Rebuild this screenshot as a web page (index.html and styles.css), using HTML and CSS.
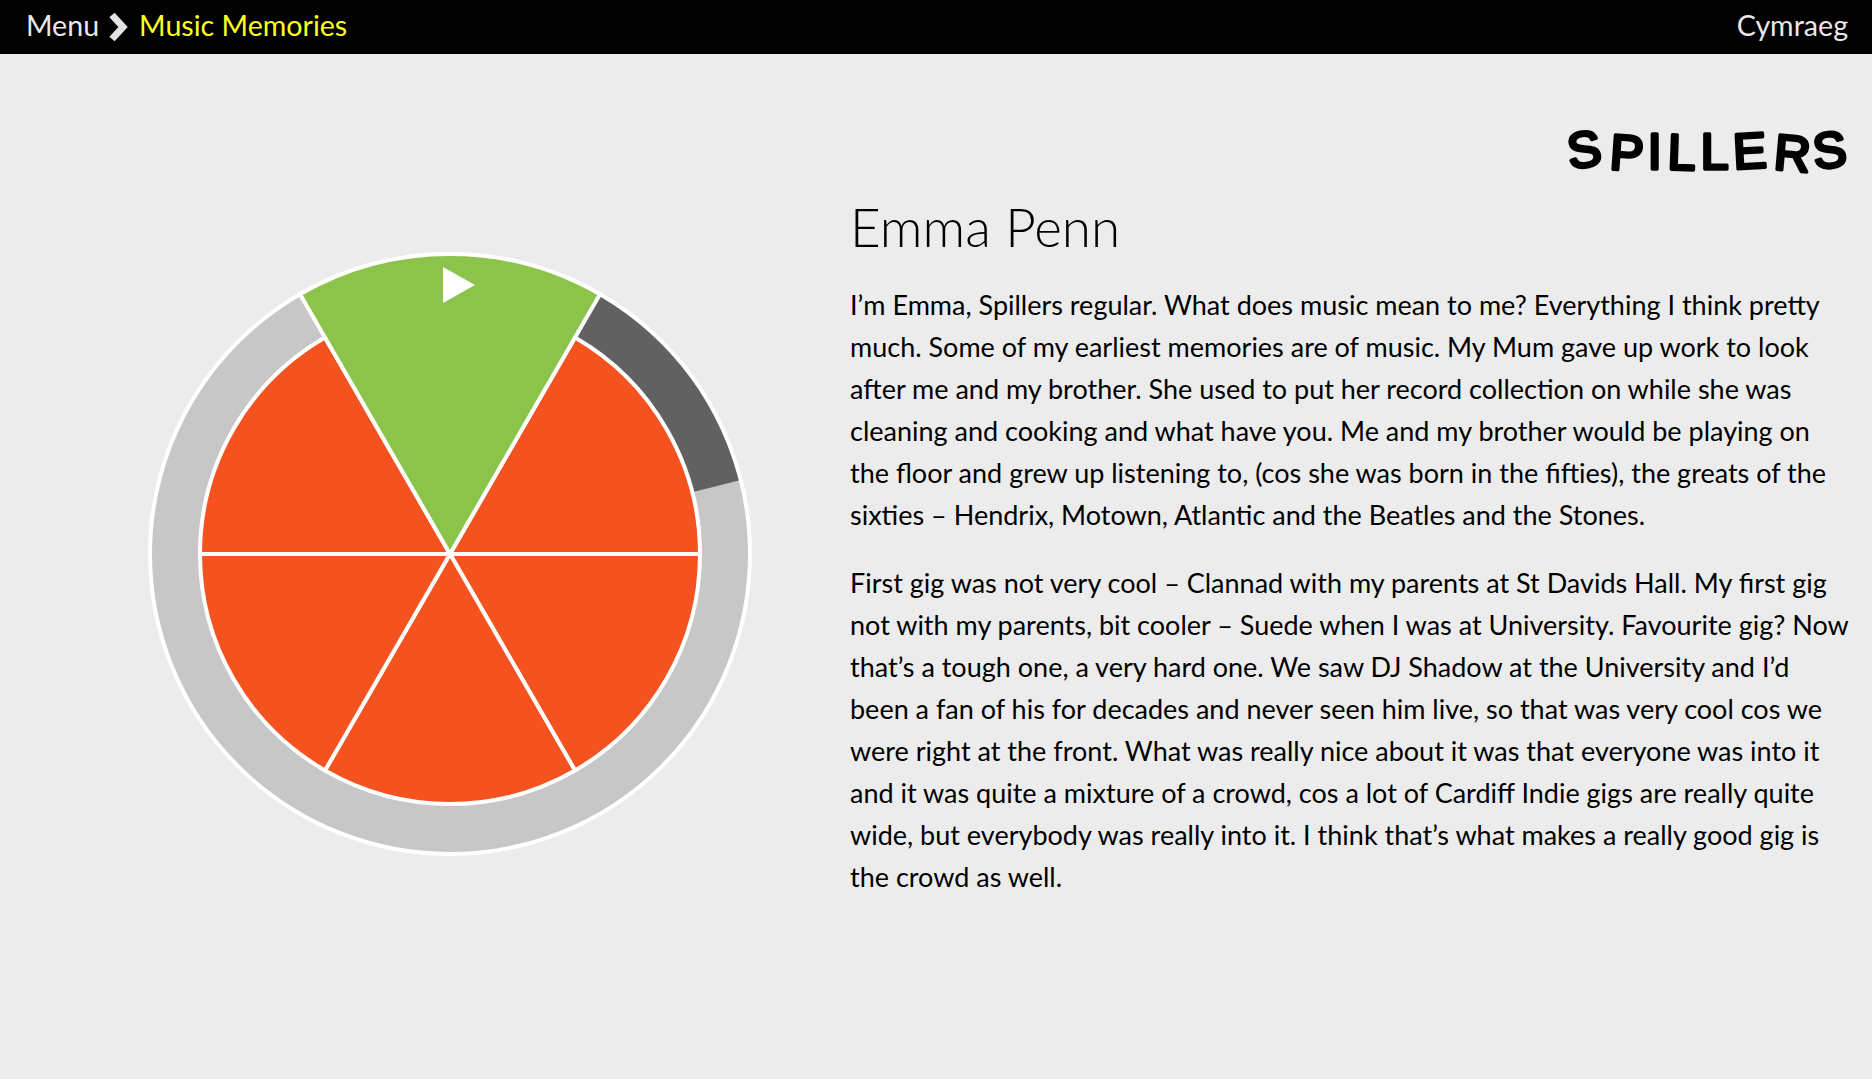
FILE: index.html
```html
<!DOCTYPE html>
<html lang="en">
<head>
    <meta charset="UTF-8">
    <title>Music Memories</title>
    <link rel="stylesheet" href="styles.css">
</head>
<body>
    <div class="topbar">
        <div class="crumbs">
            <a class="crumb" href="#">Menu</a>
            <svg class="chevron" width="20" height="30" viewBox="0 0 20 30">
                <polyline points="3,3 14,15 3,27" fill="none" stroke="#e4e4e4" stroke-width="7"/>
            </svg>
            <a class="crumb current" href="#">Music Memories</a>
        </div>
        <a class="crumb" href="#">Cymraeg</a>
    </div>

    <div class="page">
        <div class="wheel-col">
            <svg class="wheel" width="606" height="606" viewBox="0 0 606 606">
                <!-- outer ring -->
                <circle cx="303" cy="303" r="300" fill="#c7c7c7"/>
                <path d="M453 43.2 A300 300 0 0 1 593.7 228.9 L545.3 241.2 A250 250 0 0 0 428 86.5 Z" fill="#616161"/>
                <circle cx="303" cy="303" r="300" fill="none" stroke="#fff" stroke-width="4"/>
                <!-- segments -->
                <g fill="#f4531f" stroke="#fff" stroke-width="4" stroke-linejoin="round">
                    <path d="M303 303 L428 86.5 A250 250 0 0 1 553 303 Z"/>
                    <path d="M303 303 L553 303 A250 250 0 0 1 428 519.5 Z"/>
                    <path d="M303 303 L428 519.5 A250 250 0 0 1 178 519.5 Z"/>
                    <path d="M303 303 L178 519.5 A250 250 0 0 1 53 303 Z"/>
                    <path d="M303 303 L53 303 A250 250 0 0 1 178 86.5 Z"/>
                </g>
                <path d="M303 303 L153 43.2 A300 300 0 0 1 453 43.2 Z" fill="#8cc44b" stroke="#fff" stroke-width="4" stroke-linejoin="round"/>
                <polygon points="296,16 328,34 296,52" fill="#fff"/>
            </svg>
        </div>
        <div class="story">
            <svg class="logo" width="292" height="72" viewBox="0 0 292 72">
                <text x="4" y="52" textLength="278" rotate="-8 4 0 2 0 -3 5 -6">SPILLERS</text>
            </svg>
            <h1>Emma Penn</h1>
            <p>I’m Emma, Spillers regular. What does music mean to me? Everything I think pretty<br>
            much. Some of my earliest memories are of music. My Mum gave up work to look<br>
            after me and my brother. She used to put her record collection on while she was<br>
            cleaning and cooking and what have you. Me and my brother would be playing on<br>
            the floor and grew up listening to, (cos she was born in the fifties), the greats of the<br>
            sixties – Hendrix, Motown, Atlantic and the Beatles and the Stones.</p>
            <p>First gig was not very cool – Clannad with my parents at St Davids Hall. My first gig<br>
            not with my parents, bit cooler – Suede when I was at University. Favourite gig? Now<br>
            that’s a tough one, a very hard one. We saw DJ Shadow at the University and I’d<br>
            been a fan of his for decades and never seen him live, so that was very cool cos we<br>
            were right at the front. What was really nice about it was that everyone was into it<br>
            and it was quite a mixture of a crowd, cos a lot of Cardiff Indie gigs are really quite<br>
            wide, but everybody was really into it. I think that’s what makes a really good gig is<br>
            the crowd as well.</p>
        </div>
    </div>
</body>
</html>
```

FILE: styles.css
```css
html, body {
    height: 100%;
}
body {
    margin: 0;
    background-color: #ececec;
    color: #000;
    font-family: Lato, sans-serif;
}
.topbar {
    display: flex;
    justify-content: space-between;
    align-items: center;
    height: 54px;
    padding: 0 24px 0 26px;
    background-color: #000;
}
.crumbs {
    display: flex;
    align-items: center;
    gap: 10px;
}
.crumb {
    color: #e8e8e8;
    font-size: 28.6px;
    line-height: 50px;
    margin-bottom: 4px;
    text-decoration: none;
}
.crumb.current {
    color: #ffff1e;
}
.chevron {
    display: block;
}
.page {
    display: flex;
}
.wheel-col {
    width: 850px;
    flex: none;
    padding: 197px 0 0 147px;
    box-sizing: border-box;
}
.wheel {
    display: block;
}
.story {
    flex: 1;
    padding: 63px 14px 0 0;
}
.logo {
    display: block;
    margin-left: auto;
    overflow: visible;
}
.logo text {
    font-family: "Liberation Sans", sans-serif;
    font-size: 50px;
    fill: #000;
    stroke: #000;
    stroke-width: 3.5px;
    stroke-linejoin: round;
}
h1 {
    margin: 8px 0 27px;
    font-size: 53px;
    font-weight: 300;
    line-height: 60px;
}
p {
    margin: 0;
    font-size: 27px;
    font-weight: 400;
    line-height: 42px;
    white-space: nowrap;
}
p + p {
    margin-top: 26px;
}
```
